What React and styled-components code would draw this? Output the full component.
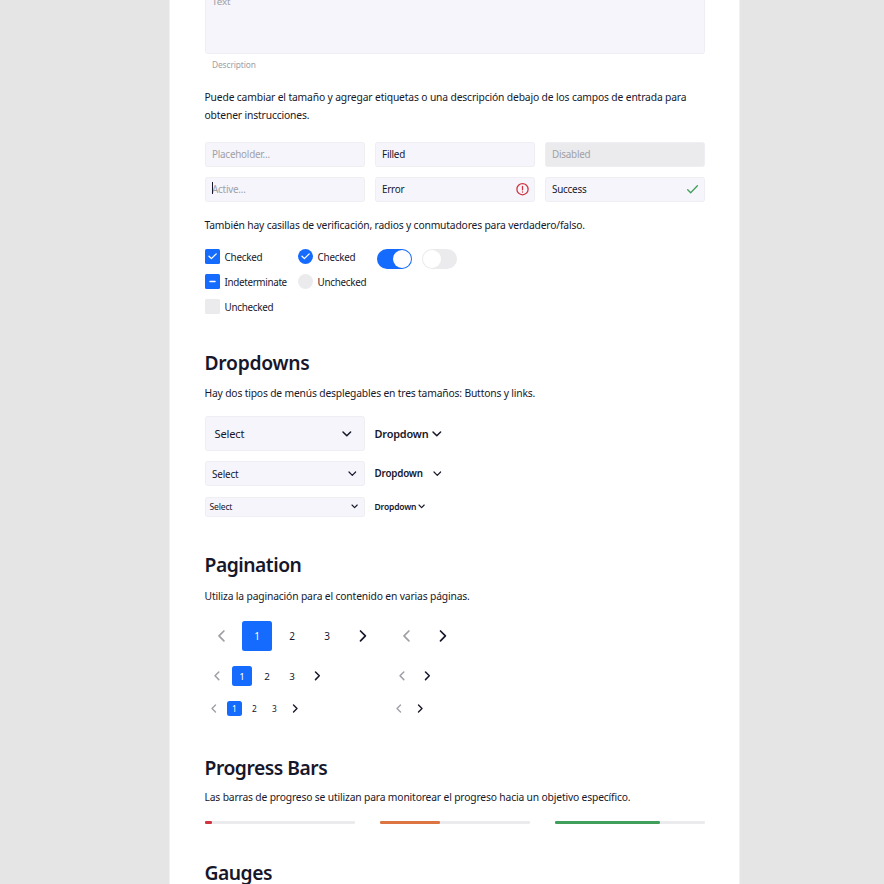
import React from 'react';
import styled, { createGlobalStyle } from 'styled-components';

const c = {
  ink: '#17172b',
  muted: '#a0a0a7',
  field: '#f5f5fb',
  line: '#efeff3',
  disabled: '#ebebed',
  blue: '#166bff',
  red: '#cf3440',
  orange: '#dc7541',
  green: '#3f9f5b',
};

const Global = createGlobalStyle`
  html, body { margin: 0; background: #e5e5e5; overflow: hidden; height: 884px; }
  * { box-sizing: border-box; }
`;

const Canvas = styled.main`
  height: 884px;
  overflow: hidden;
  display: flex;
  padding-left: 169px;
  font-family: 'Noto Sans', 'Open Sans', sans-serif;
  font-size: 10px;
  color: ${c.ink};
`;

const Sheet = styled.div`
  width: 571px;
  flex: none;
  height: 1000px;
  padding: 0 34.5px;
  background: #fff;
  border: 0 solid #f1f1f1;
  border-width: 0 1px;
`;

const Text = styled.span`
  font-size: ${(p) => p.$size ?? 9.9}px;
  font-weight: ${(p) => p.$weight ?? 400};
  letter-spacing: ${(p) => p.$ls ?? -0.23}px;
  color: ${(p) => p.$color ?? 'inherit'};
  white-space: nowrap;
`;

const TextArea = styled.div`
  height: 80px;
  margin-top: -26.5px;
  padding: 20px 7px 0 6.5px;
  line-height: 14px;
  display: flex;
  align-items: flex-start;
  background: ${c.field};
  border: 1px solid ${c.line};
  border-radius: 2.5px;
`;

const Hint = styled.div`
  height: 35.5px;
  padding-left: 7.5px;
  line-height: 21px;
`;

const Paragraph = styled.p`
  margin: 0 0 ${(p) => p.$after}px;
  font-size: 10.3px;
  line-height: 17.5px;
  letter-spacing: ${(p) => p.$ls ?? -0.16}px;
  white-space: nowrap;
`;

const Heading = styled.h2`
  margin: 0 0 ${(p) => p.$after ?? 8.5}px;
  font-size: 19.3px;
  line-height: 26px;
  font-weight: 600;
  letter-spacing: ${(p) => p.$ls ?? -0.48}px;
`;

const Section = styled.section`
  padding-top: ${(p) => p.$before ?? 36}px;
`;

const FieldGrid = styled.div`
  display: grid;
  grid-template-columns: repeat(3, 160px);
  gap: 10px;
  margin-bottom: 15.5px;
`;

const Field = styled.div`
  height: ${(p) => p.$height ?? 25}px;
  padding: 0 ${(p) => p.$right ?? 6}px 0 ${(p) => p.$pad ?? 6.5}px;
  display: flex;
  align-items: center;
  justify-content: space-between;
  background: ${(p) => (p.$disabled ? c.disabled : c.field)};
  border: 1px solid ${c.line};
  border-radius: 2.5px;
`;

const ActiveText = styled.div`
  position: relative;
  display: flex;
`;

const Caret = styled.i`
  position: absolute;
  left: 0;
  top: 0;
  width: 1px;
  height: 12px;
  background: ${c.ink};
`;

const Controls = styled.div`
  display: grid;
  grid-template-columns: 93px 79.5px auto;
  height: 65px;
`;

const Stack = styled.div`
  display: flex;
  flex-direction: column;
  gap: ${(p) => p.$gap ?? 10}px;
`;

const Choice = styled.div`
  display: flex;
  align-items: center;
  gap: 5px;
  height: 15px;
`;

const Box = styled.span`
  width: 15px;
  height: 15px;
  flex: none;
  display: flex;
  border-radius: ${(p) => (p.$round ? '50%' : '1.5px')};
  background: ${(p) => (p.$on ? c.blue : '#ebebed')};
`;

const Toggles = styled.div`
  display: flex;
  gap: 10px;
`;

const Toggle = styled.span`
  width: 35px;
  height: 20px;
  padding: 1px;
  display: flex;
  justify-content: ${(p) => (p.$on ? 'flex-end' : 'flex-start')};
  border-radius: 10px;
  background: ${(p) => (p.$on ? c.blue : '#ebebed')};
  &::after {
    content: '';
    width: 18px;
    height: 18px;
    border-radius: 50%;
    background: #fff;
  }
`;

const SelectRow = styled.div`
  display: grid;
  grid-template-columns: 160px auto;
  justify-content: start;
  align-items: center;
  column-gap: 10px;
`;

const LinkButton = styled.div`
  display: flex;
  align-items: center;
  gap: ${(p) => p.$gap}px;
`;

const PageRow = styled.div`
  display: grid;
  grid-template-columns: 185px auto;
  padding-left: 2.5px;
`;

const Pages = styled.div`
  display: flex;
  gap: 5px;
`;

const Page = styled.span`
  width: ${(p) => p.$s}px;
  height: ${(p) => p.$s}px;
  display: flex;
  align-items: center;
  justify-content: center;
  border-radius: 2.5px;
  background: ${(p) => (p.$active ? c.blue : 'transparent')};
  color: ${(p) => (p.$active ? '#fff' : c.ink)};
`;

const Bars = styled.div`
  display: grid;
  grid-template-columns: repeat(3, 150px);
  gap: 25px;
`;

const Track = styled.div`
  height: 3px;
  border-radius: 1.25px;
  background: #ebebed;
  &::before {
    content: '';
    display: block;
    width: ${(p) => p.$value}%;
    height: 100%;
    border-radius: 1.25px;
    background: ${(p) => p.$color};
  }
`;

const Svg = styled.svg`
  display: block;
  flex: none;
  overflow: visible;
  fill: none;
`;

const Down = ({ w, sw = 1.4 }) => (
  <Svg width={w} height={w / 2} stroke={c.ink} strokeWidth={sw} strokeLinecap="round" strokeLinejoin="round">
    <path d={`M0 0L${w / 2} ${w / 2}L${w} 0`} />
  </Svg>
);

const Side = ({ h, sw, next }) => (
  <Svg width={h / 2 + (next ? 0 : 1)} height={h} stroke={next ? c.ink : '#9f9fa5'} strokeWidth={sw} strokeLinecap="round" strokeLinejoin="round">
    <path d={next ? `M.5 0L${h / 2 + 0.5} ${h / 2}L.5 ${h}` : `M${h / 2} 0L0 ${h / 2}L${h / 2} ${h}`} />
  </Svg>
);

const Tick = () => (
  <Svg width="15" height="15" stroke="#fff" strokeWidth="1.3" strokeLinecap="round" strokeLinejoin="round">
    <path d="M4 7.3L6.4 9.6L11.2 4.9" />
  </Svg>
);

const selects = [
  { h: 35, pad: 9, right: 12.5, size: 11.1, link: 10.9, w: 7.6, lw: 7.6, gap: 4.3, sw: 1.5 },
  { h: 25, pad: 6.5, right: 8, size: 9.9, link: 9.8, w: 6.6, lw: 6.6, gap: 11, sw: 1.2 },
  { h: 20, pad: 4, right: 6.5, size: 8.6, link: 8.5, w: 5.2, lw: 5.2, gap: 3, sw: 1.15 },
];

const pages = [
  { s: 30, size: 10, h: 9.8, sw: 1.7 },
  { s: 20, size: 9.8, h: 7.6, sw: 1.5 },
  { s: 15, size: 8.4, h: 7, sw: 1.4 },
];

export default function App() {
  return (
    <Canvas>
      <Global />
      <Sheet>
        <TextArea><Text $size={9.8} $ls={-0.1} $color={c.muted}>Text</Text></TextArea>
        <Hint><Text $size={8.4} $ls={-0.12} $color={c.muted}>Description</Text></Hint>
        <Paragraph $after={17.5} $ls={-0.148}>
          Puede cambiar el tamaño y agregar etiquetas o una descripción debajo de los campos de entrada para<br />
          obtener instrucciones.
        </Paragraph>
        <FieldGrid>
          <Field><Text $color={c.muted}>Placeholder...</Text></Field>
          <Field><Text>Filled</Text></Field>
          <Field $disabled><Text $color={c.muted}>Disabled</Text></Field>
          <Field>
            <ActiveText><Caret /><Text $color={c.muted}>Active...</Text></ActiveText>
          </Field>
          <Field $right={5}>
            <Text>Error</Text>
            <Svg width="13" height="13" stroke={c.red} strokeWidth="1.3" strokeLinecap="round">
              <circle cx="6.5" cy="6.2" r="5.6" />
              <path d="M6.5 3.4V6.8M6.5 8.8V9" />
            </Svg>
          </Field>
          <Field $right={6}>
            <Text>Success</Text>
            <Svg width="11" height="9" stroke={c.green} strokeWidth="1.3" strokeLinecap="round" strokeLinejoin="round">
              <path d="M.7 4.8L3.7 7.7L10.4 .8" />
            </Svg>
          </Field>
        </FieldGrid>
        <Paragraph $after={14.5} $ls={-0.17}>También hay casillas de verificación, radios y conmutadores para verdadero/falso.</Paragraph>
        <Controls>
          <Stack>
            <Choice><Box $on><Tick /></Box><Text>Checked</Text></Choice>
            <Choice>
              <Box $on>
                <Svg width="15" height="15" stroke="#fff" strokeWidth="1.5" strokeLinecap="round"><path d="M5 7.5H10" /></Svg>
              </Box>
              <Text $ls={-0.35}>Indeterminate</Text>
            </Choice>
            <Choice><Box /><Text $ls={-0.28}>Unchecked</Text></Choice>
          </Stack>
          <Stack>
            <Choice><Box $on $round><Tick /></Box><Text>Checked</Text></Choice>
            <Choice><Box $round /><Text $ls={-0.28}>Unchecked</Text></Choice>
          </Stack>
          <Toggles><Toggle $on /><Toggle /></Toggles>
        </Controls>

        <Section>
          <Heading $ls={-0.28}>Dropdowns</Heading>
          <Paragraph $after={14} $ls={-0.17}>Hay dos tipos de menús desplegables en tres tamaños: Buttons y links.</Paragraph>
          <Stack $gap={10.25}>
            {selects.map((s) => (
              <SelectRow key={s.h}>
                <Field $height={s.h} $pad={s.pad} $right={s.right}>
                  <Text $size={s.size} $ls={-0.18}>Select</Text><Down w={s.w} sw={s.sw} />
                </Field>
                <LinkButton $gap={s.gap}>
                  <Text $size={s.link} $weight={600} $ls={-0.17}>Dropdown</Text><Down w={s.lw} sw={s.sw} />
                </LinkButton>
              </SelectRow>
            ))}
          </Stack>
        </Section>

        <Section $before={35.5}>
          <Heading $after={9.5}>Pagination</Heading>
          <Paragraph $after={16} $ls={-0.15}>Utiliza la paginación para el contenido en varias páginas.</Paragraph>
          <Stack $gap={15}>
            {pages.map((p) => (
              <PageRow key={p.s}>
                <Pages>
                  <Page $s={p.s}><Side h={p.h} sw={p.sw} /></Page>
                  {[1, 2, 3].map((n) => (
                    <Page key={n} $s={p.s} $active={n === 1}><Text $size={p.size} $ls={0}>{n}</Text></Page>
                  ))}
                  <Page $s={p.s}><Side h={p.h} sw={p.sw} next /></Page>
                </Pages>
                <Pages>
                  <Page $s={p.s}><Side h={p.h} sw={p.sw} /></Page>
                  <Page $s={p.s}><Side h={p.h} sw={p.sw} next /></Page>
                </Pages>
              </PageRow>
            ))}
          </Stack>
        </Section>

        <Section $before={38.5}>
          <Heading>Progress Bars</Heading>
          <Paragraph $after={14.5} $ls={-0.16}>Las barras de progreso se utilizan para monitorear el progreso hacia un objetivo específico.</Paragraph>
          <Bars>
            <Track $value={5} $color={c.red} />
            <Track $value={40} $color={c.orange} />
            <Track $value={70} $color={c.green} />
          </Bars>
        </Section>

        <Section>
          <Heading $ls={-0.5}>Gauges</Heading>
        </Section>
      </Sheet>
    </Canvas>
  );
}
